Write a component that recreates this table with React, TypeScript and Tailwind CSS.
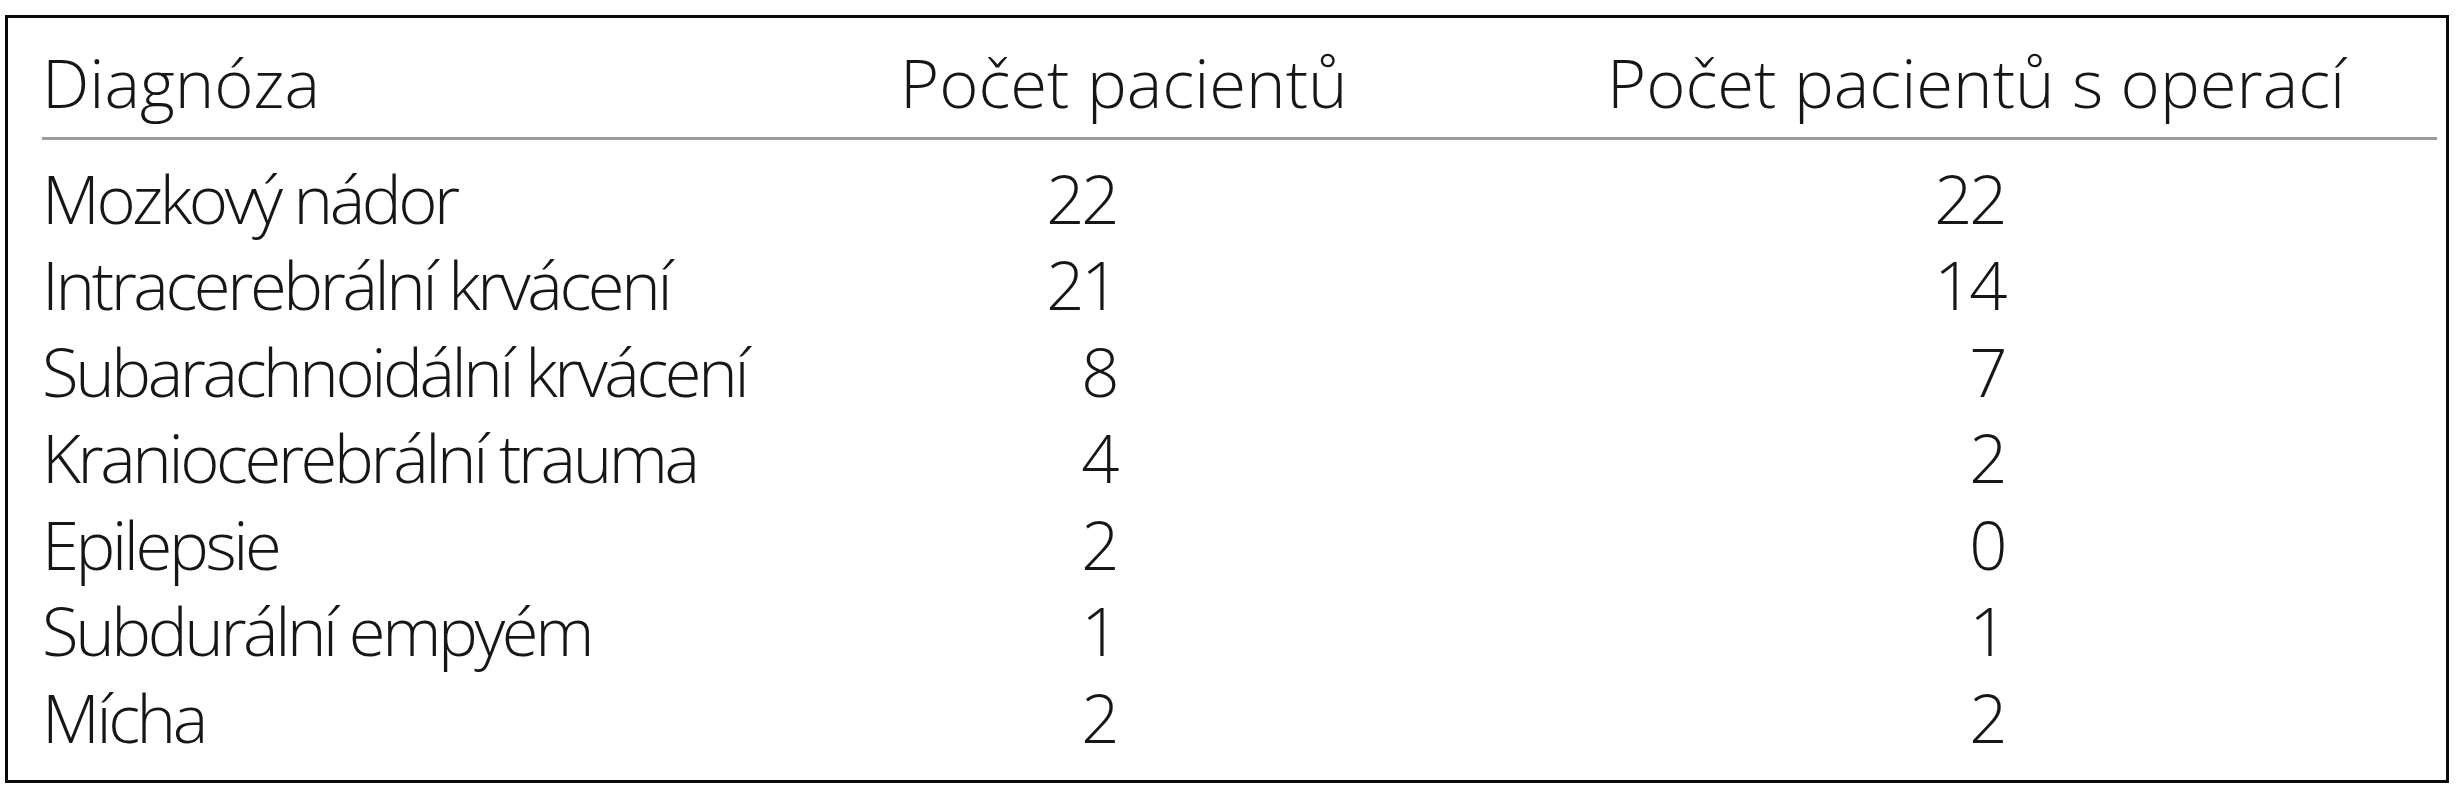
import React from "react";

const rows: [string, string, string][] = [
  ["Mozkový nádor", "22", "22"],
  ["Intracerebrální krvácení", "21", "14"],
  ["Subarachnoidální krvácení", "8", "7"],
  ["Kraniocerebrální trauma", "4", "2"],
  ["Epilepsie", "2", "0"],
  ["Subdurální empyém", "1", "1"],
  ["Mícha", "2", "2"],
];

export default function App() {
  return (
    <div className="w-[2459px] h-[800px] bg-white pt-[15px] pl-[5px]">
      <div
        className="w-[2444px] h-[768px] border-[3px] border-[#0a0a0a] pl-[34px] pr-[9px] pt-[21px] text-[67px] leading-[86.5px] font-light text-[#161616]"
        style={{ fontFamily: '"Open Sans", "Noto Sans", sans-serif' }}
      >
        <div className="grid grid-cols-[858px_707px_1fr] pb-[11px] border-b-[3px] border-[#9c9c9c]">
          <div>Diagnóza</div>
          <div>Počet pacientů</div>
          <div>Počet pacientů s operací</div>
        </div>
        <div className="pt-[15px] tracking-[-3.4px]">
          {rows.map(([d, a, b]) => (
            <div key={d} className="grid grid-cols-[858px_707px_1fr]">
              <div>{d}</div>
              <div className="w-[216px] text-right">{a}</div>
              <div className="w-[397px] text-right">{b}</div>
            </div>
          ))}
        </div>
      </div>
    </div>
  );
}
